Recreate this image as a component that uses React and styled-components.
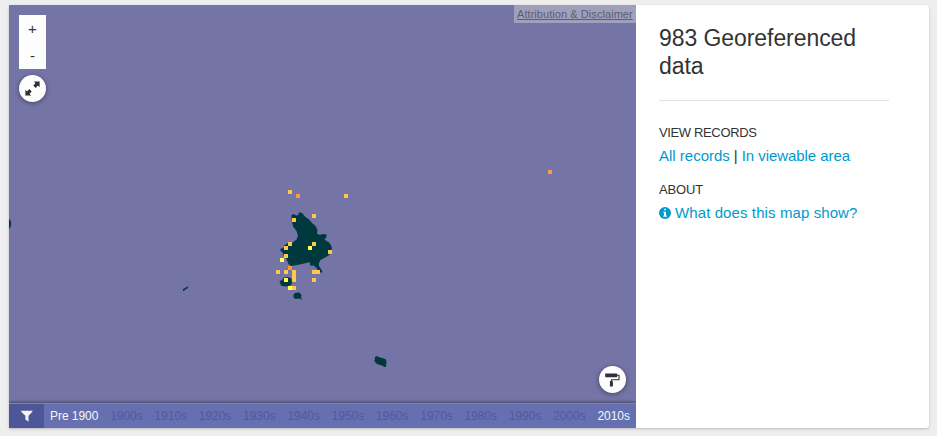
import React from "react";
import styled, { createGlobalStyle } from "styled-components";

const GlobalStyle = createGlobalStyle`
  *, *::before, *::after { box-sizing: border-box; }
  body {
    margin: 0;
    height: 436px;
    overflow: hidden;
    background: #eeeeee;
    font-family: "Liberation Sans", Arial, sans-serif;
    color: #333333;
  }
`;

const Card = styled.main`
  display: flex;
  width: 920px;
  height: 423px;
  margin: 5px 0 0 9px;
  background: #ffffff;
  border-radius: 0 3px 3px 0;
  box-shadow: 0 1px 3px rgba(0, 0, 0, 0.22);
`;

const MapPane = styled.section`
  position: relative;
  display: flex;
  flex-direction: column;
  width: 627px;
  background: #7474a7;
  overflow: hidden;
`;

const MapCanvas = styled.svg`
  display: block;
  width: 627px;
  height: 398px;
`;

const Controls = styled.div`
  position: absolute;
  top: 10px;
  left: 10px;
  display: flex;
  flex-direction: column;
  gap: 6px;
`;

const ZoomGroup = styled.div`
  display: flex;
  flex-direction: column;
  background: #fdfdfd;
`;

const ZoomButton = styled.button`
  width: 27px;
  height: 27px;
  padding: 0;
  border: 0;
  background: transparent;
  color: #333333;
  font: 15px/27px "Liberation Sans", Arial, sans-serif;
`;

const RoundButton = styled.button`
  display: flex;
  align-items: center;
  justify-content: center;
  width: 27px;
  height: 27px;
  padding: 0;
  border: 0;
  border-radius: 50%;
  background: #fdfdfd;
  box-shadow: 0 1px 5px rgba(0, 0, 0, 0.42);
`;

const StyleControl = styled.div`
  position: absolute;
  right: 10px;
  bottom: 35px;
`;

const Attribution = styled.a`
  position: absolute;
  top: 0;
  right: 0;
  width: 122px;
  height: 18px;
  padding-left: 3px;
  background: #a0a0bc;
  color: #5d5d6d;
  font-size: 11px;
  line-height: 18px;
  letter-spacing: 0.06px;
  text-decoration: underline;
  white-space: nowrap;
`;

const Timeline = styled.nav`
  display: flex;
  height: 25px;
  border-top: 1px solid #8584aa;
  background: #6670b0;
  box-shadow: 0 -1px 3px rgba(0, 0, 0, 0.4);
  z-index: 1;
`;

const FilterButton = styled.button`
  display: flex;
  align-items: center;
  justify-content: center;
  width: 35px;
  padding: 0;
  border: 0;
  background: #4d5797;
`;

const Decades = styled.div`
  display: flex;
  flex: 1;
  justify-content: space-between;
  padding: 0 6px;
`;

const Decade = styled.span`
  font-size: 12px;
  line-height: 24px;
  letter-spacing: -0.04px;
  color: ${(p) => (p.$active ? "#f5f6fb" : "#505a9b")};
  white-space: nowrap;
`;

const Sidebar = styled.aside`
  flex: 1;
  padding: 19px 40px 0 23px;
`;

const Title = styled.h1`
  margin: 0;
  padding-bottom: 20px;
  border-bottom: 1px solid #e1e1e1;
  font-size: 23px;
  font-weight: 400;
  line-height: 28px;
  letter-spacing: -0.07px;
`;

const Group = styled.section`
  margin-top: ${(p) => p.$top}px;
`;

const GroupTitle = styled.h2`
  margin: 0;
  font-size: 13px;
  font-weight: 400;
  line-height: 16px;
  letter-spacing: ${(p) => p.$tracking || 0}px;
`;

const Links = styled.p`
  display: flex;
  align-items: center;
  gap: 4px;
  margin: 5px 0 0;
  font-size: 15px;
  line-height: 19px;
  white-space: nowrap;
`;

const Link = styled.a`
  color: #0099cb;
  letter-spacing: ${(p) => p.$tracking || 0}px;
`;

const LAND = "#00393d";
const AMBER = "#ffc846";
const ORANGE = "#ff9a36";
const YELLOW = "#ffff55";

const records = [
  [290, 192, AMBER], [298, 196, ORANGE], [346, 196, AMBER], [550, 172, ORANGE],
  [314, 216, AMBER], [294, 220, AMBER], [290, 244, AMBER], [314, 244, AMBER],
  [286, 248, AMBER], [310, 248, YELLOW], [330, 252, AMBER], [286, 256, AMBER],
  [282, 260, YELLOW], [290, 268, ORANGE], [278, 272, AMBER], [286, 272, AMBER],
  [294, 272, AMBER], [294, 276, AMBER], [294, 280, AMBER], [314, 272, AMBER],
  [318, 272, AMBER], [314, 280, AMBER], [286, 280, YELLOW], [290, 288, YELLOW],
  [294, 288, AMBER],
];

const islands = [
  "291.5,215 293.5,214 296,215.5 298.5,215 298.5,213 300,212.3 302.5,213.5 305,216.5 309,219.5 312,223 315.5,226 317.5,230 317,233.5 320,235 322.5,234 326.5,234.5 326.5,237 324.5,239.5 329,242.5 331.5,246 332,250 330.5,254 326,257 320.5,260 319,263 319,266 322.3,271 321.8,273 319,271.5 316,267.5 313.5,265.5 310.3,265.8 309.8,262.3 306,263 302,264 297,265 291,266 288.5,264 286.5,259 283.5,255.5 283,253 280,250 281,248.5 283.5,248 284,245.5 288,243 292,243 296.5,239.5 298,236 296.5,231 293,226.5 292,222 291.5,218",
  "279.5,281 282,280 284,277.5 288,277 291.5,278.5 292,283 290.5,285.5 286,286.5 281,285.8 280.5,284",
  "293.5,294.5 295.5,292.7 299,292.5 300.5,293.5 301.5,295.5 301,297.5 302.5,299.8 299,298.5 295.5,299 293.5,297.5",
  "375,357 377,356 380,357.5 382.5,358 386,359.5 386.5,362 386,366.8 384.5,367 382,365.5 377,364 374.5,361.5",
  "183,291 183,289 185,288 187,286.7 188.5,286.5 188,288 185.5,289.5 184,291",
  "9,219 10.5,220.5 11.3,224 10.3,227.5 9,229",
];

const decades = [
  "Pre 1900", "1900s", "1910s", "1920s", "1930s", "1940s", "1950s",
  "1960s", "1970s", "1980s", "1990s", "2000s", "2010s",
];
const activeDecades = ["Pre 1900", "2010s"];

function ExpandIcon() {
  return (
    <svg width="15" height="15" viewBox="0 0 15 15" fill="#2d2d33">
      <path d="M8.8.4h5.800v5.800l-1.700-1.600-2.300 2.300-2.300-2.300 2.200-2.300z" />
      <path d="M6.200 14.600H.4V8.800l1.700 1.600 2.300-2.300 2.300 2.300-2.200 2.300z" />
    </svg>
  );
}

function RollerIcon() {
  return (
    <svg width="15" height="14" viewBox="0 0 15 14">
      <rect x="0.2" y="0.5" width="12" height="3.8" rx="0.7" fill="#303036" />
      <path d="M12 2.300h2v4.500H6.500v1.500" fill="none" stroke="#303036" strokeWidth="1.1" />
      <rect x="4.9" y="7.9" width="3" height="5.6" rx="0.6" fill="#303036" />
    </svg>
  );
}

function FilterIcon() {
  return (
    <svg width="12" height="12" viewBox="0 0 12 12">
      <path d="M.2.700h11.200v1L7.500 5.800v5.900L4.400 9.500V5.800L.2 1.700z" fill="#f3f3f8" />
    </svg>
  );
}

function InfoIcon() {
  return (
    <svg width="12" height="12" viewBox="0 0 12 12">
      <circle cx="6" cy="6" r="6" fill="#0099cb" />
      <path d="M5 1.800h2v1.500H5zM4.300 4.700H7v3.900h.8v1.100H4.300V8.600H5V5.800h-.7z" fill="#fff" />
    </svg>
  );
}

export default function App() {
  return (
    <>
      <GlobalStyle />
      <Card>
        <MapPane>
          <MapCanvas viewBox="9 5 627 398">
            {islands.map((points) => (
              <polygon key={points} points={points} fill={LAND} />
            ))}
            {records.map(([x, y, fill]) => (
              <rect key={`${x}-${y}`} x={x - 2} y={y - 2} width="4" height="4" fill={fill} shapeRendering="crispEdges" />
            ))}
          </MapCanvas>
          <Timeline>
            <FilterButton aria-label="Filter"><FilterIcon /></FilterButton>
            <Decades>
              {decades.map((label) => (
                <Decade key={label} $active={activeDecades.includes(label)}>{label}</Decade>
              ))}
            </Decades>
          </Timeline>
          <Controls>
            <ZoomGroup>
              <ZoomButton>+</ZoomButton>
              <ZoomButton>-</ZoomButton>
            </ZoomGroup>
            <RoundButton aria-label="Full screen"><ExpandIcon /></RoundButton>
          </Controls>
          <Attribution>Attribution &amp; Disclaimer</Attribution>
          <StyleControl>
            <RoundButton aria-label="Map style"><RollerIcon /></RoundButton>
          </StyleControl>
        </MapPane>
        <Sidebar>
          <Title>983 Georeferenced data</Title>
          <Group $top={24}>
            <GroupTitle $tracking={-0.36}>VIEW RECORDS</GroupTitle>
            <Links>
              <Link>All records</Link>
              <span>|</span>
              <Link $tracking={-0.06}>In viewable area</Link>
            </Links>
          </Group>
          <Group $top={17}>
            <GroupTitle $tracking={-0.15}>ABOUT</GroupTitle>
            <Links>
              <InfoIcon />
              <Link $tracking={0.1}>What does this map show?</Link>
            </Links>
          </Group>
        </Sidebar>
      </Card>
    </>
  );
}
